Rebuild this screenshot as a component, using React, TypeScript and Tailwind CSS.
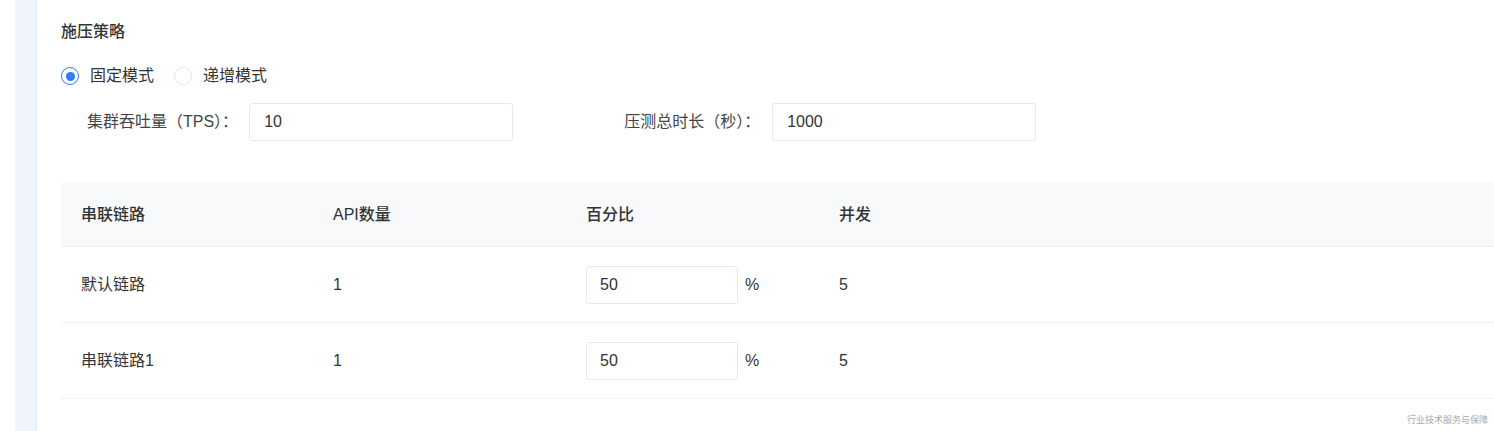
import React from "react";

const font = {
  fontFamily: '"Liberation Sans", "Noto Sans CJK SC", sans-serif',
};

type Row = { name: string; apis: number; percent: string; concurrency: number };

const rows: Row[] = [
  { name: "默认链路", apis: 1, percent: "50", concurrency: 5 },
  { name: "串联链路1", apis: 1, percent: "50", concurrency: 5 },
];

function Radio({ checked, label }: { checked?: boolean; label: string }) {
  return (
    <label className="flex items-center gap-[11px]">
      <span
        className={`flex h-[18px] w-[18px] items-center justify-center rounded-full border bg-white ${
          checked ? "border-[#2f7cf6]" : "border-[#e3e5ea]"
        }`}
      >
        {checked && <span className="h-[9px] w-[9px] rounded-full bg-[#2f7cf6]" />}
      </span>
      <span className="text-[16px] text-[#333]">{label}</span>
    </label>
  );
}

function Field({ label, value, gap }: { label: string; value: string; gap: string }) {
  return (
    <div className="flex items-center">
      <span className="text-[16px] text-[#444]">{label}</span>
      <div
        className={`${gap} flex h-[38px] w-[264px] items-center rounded-[3px] border border-[#e6e8ec] px-[14px] text-[16px] text-[#333]`}
      >
        {value}
      </div>
    </div>
  );
}

export default function App() {
  return (
    <div className="flex h-[431px] w-[1494px] overflow-hidden bg-white" style={font}>
      {/* side strip */}
      <div className="w-[15px] shrink-0 bg-white" />
      <div className="w-[20px] shrink-0 bg-[#f0f5fb]" />
      <div className="w-[2px] shrink-0 bg-[#e6edf6]" />

      <div className="relative flex-1 pl-[24px]">
        <h3 className="pt-[21px] text-[16px] font-medium leading-[22px] text-[#333]">施压策略</h3>

        <div className="mt-[21px] flex items-center gap-[20px]">
          <Radio checked label="固定模式" />
          <Radio label="递增模式" />
        </div>

        <div className="mt-[15px] flex items-center pl-[26px]">
          <Field label="集群吞吐量（TPS）：" value="10" gap="ml-[11px]" />
          <div className="ml-[111px]">
            <Field label="压测总时长（秒）：" value="1000" gap="ml-[12px]" />
          </div>
        </div>

        {/* table */}
        <div className="mt-[42px] text-[16px] text-[#333]">
          <div className="flex h-[64px] items-center border-b border-[#f0f1f4] bg-[#f8f9fb] font-medium">
            <div className="w-[272px] pl-[20px]">串联链路</div>
            <div className="w-[253px]">API数量</div>
            <div className="w-[253px]">百分比</div>
            <div className="flex-1">并发</div>
          </div>
          {rows.map((r) => (
            <div key={r.name} className="flex h-[76px] items-center border-b border-[#f0f1f4]">
              <div className="w-[272px] pl-[20px]">{r.name}</div>
              <div className="w-[253px]">{r.apis}</div>
              <div className="flex w-[253px] items-center">
                <div className="flex h-[38px] w-[152px] items-center rounded-[3px] border border-[#e6e8ec] px-[13px]">
                  {r.percent}
                </div>
                <span className="ml-[7px]">%</span>
              </div>
              <div className="flex-1">{r.concurrency}</div>
            </div>
          ))}
        </div>

        <div className="absolute bottom-[4px] right-[6px] text-[9px] text-[#aaa]">行业技术服务与保障</div>
      </div>
    </div>
  );
}
